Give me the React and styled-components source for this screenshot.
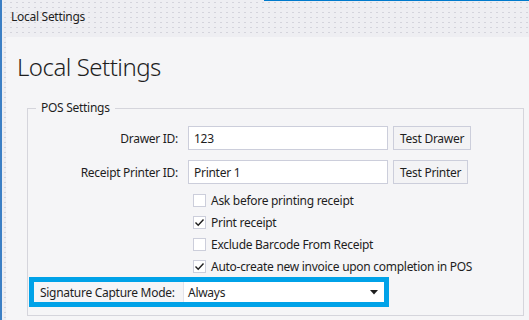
import React from 'react';
import styled, { createGlobalStyle } from 'styled-components';

const GlobalStyle = createGlobalStyle`
  html, body {
    margin: 0;
    padding: 0;
    width: 529px;
    height: 320px;
    overflow: hidden;
    background: #eeeef2;
  }
  * {
    box-sizing: border-box;
  }
`;

const Window = styled.div`
  position: relative;
  width: 529px;
  height: 320px;
  display: flex;
  flex-direction: column;
  font-family: "Noto Sans", "Open Sans", sans-serif;
  font-size: 12px;
  letter-spacing: -0.28px;
  color: #1e1e1e;
  border-left: 2px solid #3c7fc4;
  background-color: #eeeef2;
  background-image: radial-gradient(#d4d4dc 0.8px, transparent 1.1px);
  background-size: 6px 5px;

  &::after {
    content: '';
    position: absolute;
    top: 0;
    left: 262px;
    right: 0;
    height: 1px;
    background: #007acc;
  }
`;

const TitleBar = styled.div`
  height: 37px;
  flex-shrink: 0;
  padding: 9px 0 0 9px;
  font-size: 12px;
  line-height: 16px;
`;

const Content = styled.div`
  flex: 1;
  margin-left: 4px;
  background: #f5f5f7;
  display: flex;
  flex-direction: column;
  padding: 0 5px 0 21px;
`;

const Heading = styled.h1`
  margin: 13px 0 0 -10px;
  font-size: 24px;
  font-weight: 300;
  letter-spacing: -0.5px;
  line-height: 34px;
  color: #1e1e1e;
`;

const Group = styled.fieldset`
  margin: 17px 0 0 0;
  padding: 11px 0 8px 0;
  border: 1px solid #d5d5dc;
  border-radius: 0;
  min-width: 0;
`;

const Legend = styled.legend`
  margin-left: 8px;
  padding: 0 5px;
  font-size: 12px;
  line-height: 14px;
`;

const FieldRow = styled.div`
  display: grid;
  grid-template-columns: 150px 200px auto;
  column-gap: 10px;
  align-items: center;
  margin-bottom: 10px;
`;

const Label = styled.label`
  text-align: right;
  white-space: nowrap;
`;

const TextBox = styled.div`
  height: 24px;
  background: #fff;
  border: 1px solid #cccedb;
  padding: 0 5px;
  display: flex;
  align-items: center;
`;

const Button = styled.button`
  justify-self: start;
  margin-left: -5px;
  height: 24px;
  padding: 0 6px;
  font: inherit;
  letter-spacing: inherit;
  color: #1e1e1e;
  background: #f3f3f5;
  border: 1px solid #cccedb;
  cursor: pointer;
`;

const CheckList = styled.div`
  display: flex;
  flex-direction: column;
  padding-left: 165px;
  margin-top: -5px;
`;

const CheckRow = styled.div`
  display: flex;
  align-items: center;
  height: 22px;
  gap: 5px;
  white-space: nowrap;
`;

const Box = styled.span`
  width: 13px;
  height: 13px;
  background: #fff;
  border: 1px solid #cccedb;
  display: flex;
  align-items: center;
  justify-content: center;
`;

const Highlight = styled.div`
  margin: 0 134px 0 1px;
  border: 5px solid #00a2e8;
  display: flex;
  align-items: stretch;
  height: 30px;
`;

const HighlightLabel = styled.span`
  width: 149px;
  padding-left: 6px;
  display: flex;
  align-items: center;
  white-space: nowrap;
`;

const Select = styled.div`
  flex: 1;
  background: #fff;
  border-left: 1px solid #e3e3ea;
  display: flex;
  align-items: center;
  justify-content: space-between;
  padding: 0 6px 0 4px;
`;

const Check = () => (
  <svg width="11" height="11" viewBox="0 0 11 11">
    <path d="M1.5 5.5 L4.2 8.2 L9.5 2.5" fill="none" stroke="#1e1e1e" strokeWidth="1.4" />
  </svg>
);

const Arrow = () => (
  <svg width="8" height="5" viewBox="0 0 8 5">
    <path d="M0 0 H8 L4 4.5 Z" fill="#1e1e1e" />
  </svg>
);

const checks = [
  { text: 'Ask before printing receipt', on: false },
  { text: 'Print receipt', on: true },
  { text: 'Exclude Barcode From Receipt', on: false },
  { text: 'Auto-create new invoice upon completion in POS', on: true },
];

const App = () => (
  <>
    <GlobalStyle />
    <Window>
      <TitleBar>Local Settings</TitleBar>
      <Content>
        <Heading>Local Settings</Heading>
        <Group>
          <Legend>POS Settings</Legend>
          <FieldRow>
            <Label>Drawer ID:</Label>
            <TextBox>123</TextBox>
            <Button>Test Drawer</Button>
          </FieldRow>
          <FieldRow>
            <Label>Receipt Printer ID:</Label>
            <TextBox>Printer 1</TextBox>
            <Button>Test Printer</Button>
          </FieldRow>
          <CheckList>
            {checks.map((c) => (
              <CheckRow key={c.text}>
                <Box>{c.on && <Check />}</Box>
                {c.text}
              </CheckRow>
            ))}
          </CheckList>
          <Highlight>
            <HighlightLabel>Signature Capture Mode:</HighlightLabel>
            <Select>
              Always
              <Arrow />
            </Select>
          </Highlight>
        </Group>
      </Content>
    </Window>
  </>
);

export default App;
